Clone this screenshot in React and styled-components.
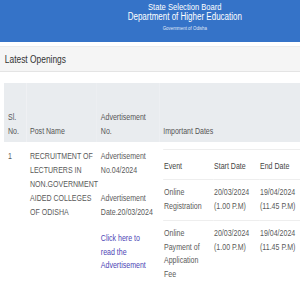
import React from 'react'
import styled, { createGlobalStyle } from 'styled-components'

// the page font in the screenshot is a narrow sans; we squeeze Liberation Sans to match
const SQUEEZE = 0.8

const Global = createGlobalStyle`
  html, body {
    margin: 0;
    overflow: hidden;
    background: #fff;
  }
  body {
    font-family: "Liberation Sans", Arial, sans-serif;
    color: #5a5a5a;
  }
`

const Page = styled.div`
  width: ${300 / SQUEEZE}px;
  transform: scaleX(${SQUEEZE});
  transform-origin: left top;
`

const Header = styled.div`
  background: #3573c8;
  height: 42px;
  padding-left: 87px;
  display: flex;
  flex-direction: column;
  align-items: center;
  color: #fff;
  line-height: 1;
`

const Board = styled.div`
  font-size: 9.5px;
  margin-top: 2px;
`

const Dept = styled.div`
  font-size: 10px;
  margin-top: 0.5px;
`

const Gov = styled.div`
  font-size: 5.5px;
  margin-top: 3.5px;
  opacity: 0.85;
`

const Panel = styled.div`
  margin-top: 4px;
  background: #f5f5f5;
  border-top: 1px solid #ececec;
  border-bottom: 1px solid #e4e4e4;
  height: 24px;
  display: flex;
  align-items: center;
  padding-left: 6px;
  font-size: 10.5px;
  color: #333;
`

const Body = styled.div`
  padding: 11px 0 0 5px;
`

const Table = styled.div`
  display: grid;
  grid-template-columns: 27.5px 88.5px 78px 1fr;
  font-size: 8.8px;
  line-height: 14px;
  white-space: nowrap;
`

const HeadCell = styled.div`
  background: #e9ecef;
  height: 55px;
  display: flex;
  align-items: flex-end;
  padding: 0 0 4px 5px;
  line-height: 14px;
  color: #555;
`

const Cell = styled.div`
  padding: 7px 0 0 5px;
`

const Gap = styled.div`
  height: ${p => p.h}px;
`

const Link = styled.a`
  color: #4b45b5;
  text-decoration: none;
  display: block;
  line-height: 13.5px;
`

const Inner = styled.div`
  border-top: 1px solid #eeeeee;
  display: grid;
  grid-template-columns: 62.5px 57.5px 1fr;
`

const InHead = styled.div`
  padding: 9px 0 6px 1px;
  border-bottom: 1px solid #eeeeee;
  color: #444;
`

const InCell = styled.div`
  padding: ${p => (p.last ? '6px 0 0 1px' : '5px 0 7px 1px')};
  line-height: ${p => (p.last ? 13.5 : 14)}px;
  border-bottom: ${p => (p.last ? 'none' : '1px solid #eeeeee')};
`

export default function App() {
  return (
    <>
      <Global />
      <Page>
        <Header>
          <Board>State Selection Board</Board>
          <Dept>Department of Higher Education</Dept>
          <Gov>Government of Odisha</Gov>
        </Header>
        <Panel>Latest Openings</Panel>
        <Body>
          <Table>
            <HeadCell>Sl.<br />No.</HeadCell>
            <HeadCell>Post Name</HeadCell>
            <HeadCell>Advertisement<br />No.</HeadCell>
            <HeadCell>Important Dates</HeadCell>

            <Cell>1</Cell>
            <Cell>
              RECRUITMENT OF<br />LECTURERS IN<br />NON.GOVERNMENT<br />AIDED COLLEGES<br />OF ODISHA
            </Cell>
            <Cell>
              Advertisement<br />No.04/2024
              <Gap h={14} />
              Advertisement<br />Date.20/03/2024
              <Gap h={13} />
              <Link href="#">Click here to<br />read the<br />Advertisement</Link>
            </Cell>
            <Cell>
              <Inner>
                <InHead>Event</InHead>
                <InHead>Start Date</InHead>
                <InHead>End Date</InHead>
                <InCell>Online<br />Registration</InCell>
                <InCell>20/03/2024<br />(1.00 P.M)</InCell>
                <InCell>19/04/2024<br />(11.45 P.M)</InCell>
                <InCell last>Online<br />Payment of<br />Application<br />Fee</InCell>
                <InCell last>20/03/2024<br />(1.00 P.M)</InCell>
                <InCell last>19/04/2024<br />(11.45 P.M)</InCell>
              </Inner>
            </Cell>
          </Table>
        </Body>
      </Page>
    </>
  )
}
